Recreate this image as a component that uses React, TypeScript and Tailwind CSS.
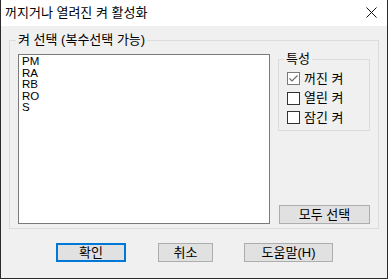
const font = "font-['Liberation_Sans','Noto_Sans_CJK_KR',sans-serif]"

const items = ['PM', 'RA', 'RB', 'RO', 'S']

function CheckRow({ label, checked }: { label: string; checked?: boolean }) {
  return (
    <label className="flex items-center h-[19.5px] ml-[3px]">
      <span
        className={
          checked
            ? 'w-[13px] h-[13px] border border-[#7a7a7a] bg-white flex items-center justify-center'
            : 'w-[13px] h-[13px] border border-[#333333] bg-white'
        }
      >
        {checked && (
          <svg width="11" height="11" viewBox="0 0 11 11">
            <path d="M1.5 5.5 L4 8 L9.5 2.5" stroke="#6d6d6d" strokeWidth="1.2" fill="none" />
          </svg>
        )}
      </span>
      <span className="ml-[4px] text-[13px] leading-[14px] text-black">{label}</span>
    </label>
  )
}

function Button({ label, focused, className }: { label: string; focused?: boolean; className: string }) {
  return (
    <button
      className={
        (focused
          ? 'border-2 border-[#0078d7] '
          : 'border border-[#adadad] ') +
        'bg-[#e1e1e1] h-[19px] flex items-center justify-center text-[13px] leading-[14px] text-black ' +
        className
      }
    >
      {label}
    </button>
  )
}

export default function App() {
  return (
    <div className={`w-[388px] h-[279px] flex flex-col border-x border-b border-[#2b2b2b] bg-[#f0f0f0] ${font}`}>
      {/* title bar */}
      <div className="h-[26px] bg-white flex items-center justify-between shrink-0">
        <span className="ml-[4px] text-[13px] leading-[14px] text-black">꺼지거나 열려진 켜 활성화</span>
        <svg width="11" height="11" viewBox="0 0 11 11" className="mr-[10px] mb-[1px]">
          <path d="M0.5 0.5 L10.5 10.5 M10.5 0.5 L0.5 10.5" stroke="#111" strokeWidth="1" />
        </svg>
      </div>

      {/* group box */}
      <fieldset className="mx-[8px] mt-[7px] border border-[#dcdcdc] px-[6px] pb-[4px] pt-[7px] flex">
        <legend className="px-[2px] text-[13px] leading-[14px] text-black">켜 선택 (복수선택 가능)</legend>
        <div className="flex ml-[2px] gap-[8px]">
          <ul className="w-[252px] h-[170px] border border-[#7a7a7a] bg-white pl-[3px] pt-[1px]">
            {items.map((it) => (
              <li key={it} className="text-[11.5px] leading-[11.5px] h-[11.5px] text-black">
                {it}
              </li>
            ))}
          </ul>
          <div className="w-[92px] flex flex-col justify-between">
            <fieldset className="border border-[#dcdcdc] px-[5px] pb-[2px] -mt-[1px]">
              <legend className="px-[2px] text-[13px] leading-[12px] text-black">특성</legend>
              <div className="pt-[4px]">
                <CheckRow label="꺼진 켜" checked />
                <CheckRow label="열린 켜" />
                <CheckRow label="잠긴 켜" />
              </div>
            </fieldset>
            <Button label="모두 선택" className="w-[91px] ml-[1px]" />
          </div>
        </div>
      </fieldset>

      {/* bottom buttons */}
      <div className="flex mt-[14px] ml-[55px]">
        <Button label="확인" focused className="w-[70px]" />
        <Button label="취소" className="w-[55px] ml-[32px]" />
        <Button label="도움말(H)" className="w-[89px] ml-[31px]" />
      </div>
    </div>
  )
}
